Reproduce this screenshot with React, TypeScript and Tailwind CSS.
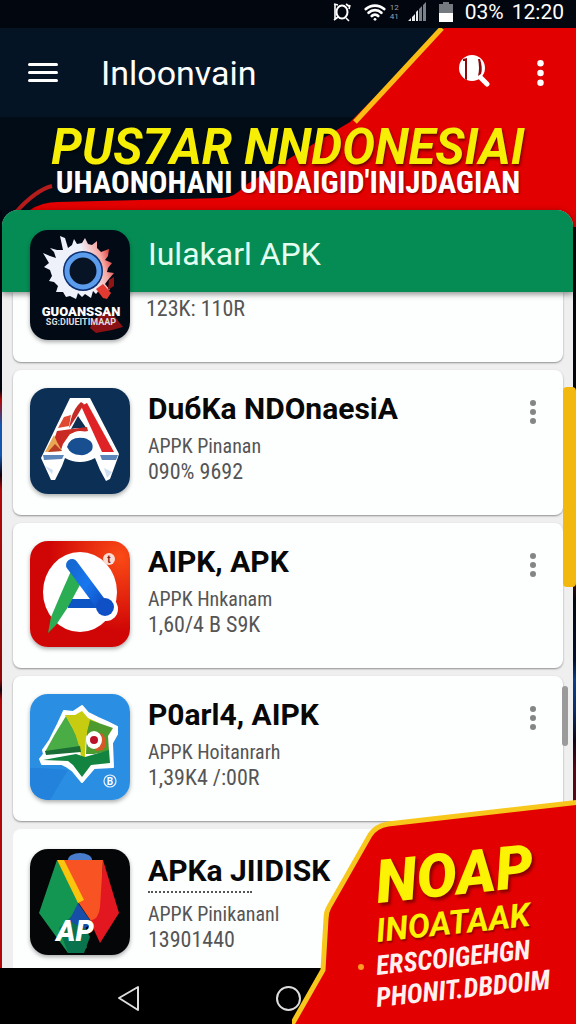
import React from "react";
import { Wifi } from "lucide-react";

type IconProps = { className?: string };

function GearIcon() {
  return (
    <svg viewBox="0 0 100 110" className="block h-[110px] w-[100px]" aria-hidden="true">
      <defs>
        <linearGradient id="gear" x1="0" y1="0.6" x2="1" y2="0.3">
          <stop offset="0.6" stopColor="#eef1fa" />
          <stop offset="0.82" stopColor="#f6a9a4" />
          <stop offset="1" stopColor="#d92020" />
        </linearGradient>
      </defs>
      <rect width="100" height="110" rx="18" fill="#020a15" />
      <path
        d="M30 6L35 8L38 18L42 15L44 9L47 14L52 13L55 8L58 14L62 15L67 11L67 18L71 22L79 19L78 26L75 30L82 33L78 38L77 42L84 43L78 50L75 54L80 60L73 62L70 59L66 64L63 61L61 68L55 64L52 67L48 63L46 69L40 66L36 67L33 62L26 62L28 56L24 52L19 51L22 46L20 40L14 37L19 33L13 23L20 26L26 28L24 22L20 18L27 20L33 20Z"
        fill="url(#gear)"
      />
      <circle cx="53" cy="41" r="20" fill="#0c2f70" />
      <circle cx="53" cy="41" r="16" fill="#071426" stroke="#5c9cec" strokeWidth="5" />
      <path d="M66 59l7-5 8 9-4 6-4-1z" fill="#e23a30" />
      <path d="M79 50l5-3v9l-6 4z" fill="#8f1414" />
      <path d="M60 98l3-8 15-10 8 8 7 9-11 3-16 3z" fill="#8a1114" />
      <text x="51" y="86" textAnchor="middle" fill="#fff" fontFamily="Roboto, sans-serif" fontWeight="900" fontSize="13">GUOANSSAN</text>
      <text x="51" y="95" textAnchor="middle" fill="#ddd" fontFamily="Roboto, sans-serif" fontWeight="700" fontSize="9">SG:DIUEITIMAAP</text>
    </svg>
  );
}

function BigAIcon() {
  return (
    <svg viewBox="0 0 100 106" className="block h-[106px] w-[100px]" aria-hidden="true">
      <rect width="100" height="106" rx="18" fill="#0b2f55" />
      <path d="M40 10H60L89 66L87 72L80 91L76 93L70 82L65 70Q58 74 50 74Q42 74 35 70L32 78L25 92L21 92L11 70Z" fill="#fff" />
      <path d="M51 18L57 15L84 64H72Z" fill="#df2226" />
      <path d="M51 14Q44 20 41 31L39 40L47 28L54 16Z" fill="#c42a26" />
      <path d="M48 28L41 41Q49 39 57 41Z" fill="#102d52" />
      <path d="M34 29L41 27L39 38L28 40Z" fill="#df4a30" />
      <path d="M27 43L57 39L58 43L40 46L33 56L31 62L24 52Z" fill="#c92a23" />
      <path d="M24 47L27 54L32 63L15 64Z" fill="#e9a653" />
      <path d="M25 56L32 63L18 64Z" fill="#b93c26" />
      <circle cx="50" cy="57" r="14" fill="#fff" />
      <path d="M37 59Q40 48 54 50Q65 53 62 62Q57 68 50 67Q41 67 37 59Z" fill="#174f91" />
      <path d="M13 67H34L32 71L14 72ZM70 67H88L86 72H72Z" fill="#5c86b9" />
      <path d="M15 78L23 82L22 86ZM74 80L82 84L77 90Z" fill="#cfe0f2" />
    </svg>
  );
}

function RoundAIcon() {
  return (
    <svg viewBox="0 0 100 106" className="block h-[106px] w-[100px]" aria-hidden="true">
      <defs>
        <radialGradient id="redTile" cx="0.9" cy="0.15" r="0.7">
          <stop offset="0" stopColor="#fa4a16" />
          <stop offset="1" stopColor="#d00606" />
        </radialGradient>
        <linearGradient id="blueLeg" x1="0" y1="0" x2="1" y2="1">
          <stop offset="0" stopColor="#1469d2" />
          <stop offset="0.45" stopColor="#1877ef" />
          <stop offset="1" stopColor="#0c4bc0" />
        </linearGradient>
      </defs>
      <rect width="100" height="106" rx="18" fill="url(#redTile)" />
      <ellipse cx="50" cy="51" rx="37" ry="40" fill="#fff" />
      <circle cx="76" cy="68" r="12" fill="#fff" />
      <path d="M38 58H62L68 67H38Z" fill="#0d55c5" />
      <path d="M41 30L51 42L38 66L26 84L18 92L21 76L30 55Z" fill="#2bad53" />
      <path d="M42 24L74 67" stroke="url(#blueLeg)" strokeWidth="12" strokeLinecap="round" />
      <circle cx="75" cy="66" r="9" fill="#0f50c6" />
      <circle cx="79" cy="18" r="6" fill="#f9ddd5" />
      <text x="79" y="22" textAnchor="middle" fill="#8b2014" fontFamily="Roboto, sans-serif" fontWeight="700" fontSize="10">t</text>
    </svg>
  );
}

function BirdIcon() {
  return (
    <svg viewBox="0 0 100 106" className="block h-[106px] w-[100px]" aria-hidden="true">
      <rect width="100" height="106" rx="18" fill="#2a8fe3" />
      <path d="M10 74L38 76L20 106H18Q0 104 0 88V74Z" fill="#2382dc" />
      <path
        d="M34 17L43 18L52 12L58 19L68 24L77 28L87 33L87 40L82 49L83 73L64 74L52 88L43 77L36 72L32 70H12L10 65L14 60L13 56L20 46L28 30Z"
        fill="#fff"
        stroke="#fff"
        strokeWidth="2"
        strokeLinejoin="round"
      />
      <path d="M36 22L46 40L50 54L15 58L25 40Z" fill="#4aac45" />
      <path d="M35 21L45 21L52 17L58 24L69 29L64 36L56 42L55 63H51Q49 42 35 21Z" fill="#c8cc10" />
      <path d="M60 26L83 34L78 42L79 57L64 60L56 60L57 38Z" fill="#4d9a2e" />
      <path d="M15 57L50 52L51 58L16 61Z" fill="#196d35" />
      <path d="M13 66L46 60L55 63L79 56L80 69L61 71L52 83L43 71L38 67Z" fill="#128440" />
      <path d="M71 38Q80 48 73 56L65 57L66 52Z" fill="#d65824" />
      <ellipse cx="64" cy="46" rx="8" ry="9" fill="#fff" />
      <circle cx="64" cy="46" r="4" fill="#bc1229" />
      <circle cx="80" cy="87" r="6" fill="none" stroke="#e5f2ff" strokeWidth="1.2" />
      <text x="80" y="91" textAnchor="middle" fill="#fff" fontFamily="Roboto, sans-serif" fontWeight="700" fontSize="10">B</text>
    </svg>
  );
}

function GemIcon() {
  return (
    <svg viewBox="0 0 100 106" className="block h-[106px] w-[100px]" aria-hidden="true">
      <rect width="100" height="106" rx="18" fill="#050608" />
      <ellipse cx="50" cy="11" rx="12" ry="7" fill="#477dcc" />
      <path d="M27 11L49 53L40 77L57 98L52 104H38L9 64Z" fill="#149653" />
      <path d="M29 79L47 62L60 88L54 104H38Z" fill="#08734c" />
      <path d="M48 54L62 74L54 80L39 72Z" fill="#174fa8" />
      <path d="M31 11H73L71 69L61 72L48 53Z" fill="#f85322" />
      <path d="M73 11L89 64L70 94L60 72Q69 70 70 58Z" fill="#e3171f" />
      <path d="M27 11H34L54 51L48 54Z" fill="#fbc40d" />
      <text x="45" y="92" textAnchor="middle" fill="#fff" fontFamily="Roboto, sans-serif" fontWeight="900" fontStyle="italic" fontSize="29">AP</text>
    </svg>
  );
}

function Dots({ className }: IconProps) {
  return (
    <svg viewBox="0 0 8 24" className={className} fill="currentColor" aria-hidden="true">
      <circle cx="4" cy="3" r="3" />
      <circle cx="4" cy="12" r="3" />
      <circle cx="4" cy="21" r="3" />
    </svg>
  );
}

function AlarmIcon() {
  return (
    <svg viewBox="0 0 20 20" className="h-5 w-5" fill="none" stroke="#fff" strokeWidth="2" aria-hidden="true">
      <ellipse cx="10" cy="10" rx="5.5" ry="6.5" />
      <path d="M2 2l4 1M3 3v14M2 18l4-3M14 2l4 3M17 7l1-4M14 16l3 3" strokeWidth="1.6" />
    </svg>
  );
}

function SignalIcon() {
  return (
    <svg viewBox="0 0 20 20" className="h-5 w-5" aria-hidden="true">
      <path d="M1 19h3v-3zM5 19h3v-7l-3 3zM9 19h2V8l-2 2z" fill="#e8eaec" />
      <path d="M12 19h3V4l-3 3zM16 19h3V0l-3 3z" fill="#7b828a" />
    </svg>
  );
}

function BatteryIcon() {
  return (
    <svg viewBox="0 0 14 20" className="h-5 w-[14px]" aria-hidden="true">
      <path d="M4 0h6v2h4v9H0V2h4z" fill="#747a80" />
      <path d="M0 11h14v9H0z" fill="#fff" />
    </svg>
  );
}

function SearchGlyph() {
  return (
    <svg viewBox="0 0 32 34" className="h-[34px] w-8" aria-hidden="true">
      <path d="M21 22l8 8" stroke="#fff" strokeWidth="5" strokeLinecap="round" />
      <circle cx="14" cy="14" r="13" fill="#fff" />
      <path d="M5 5L9 4V26L7 25V7H5Z" fill="#8d0b10" />
      <path d="M20 5H22Q25 14 23 20L20 22Q22 14 20 5Z" fill="#8d0b10" />
    </svg>
  );
}

function StatusBar() {
  return (
    <div className="relative flex h-7 items-start justify-end bg-[#02060e] pt-px pr-3 text-white">
      <div className="flex items-center">
        <AlarmIcon />
        <Wifi className="ml-3 h-[22px] w-[22px]" strokeWidth={3} aria-hidden="true" />
        <span className="ml-1 flex flex-col text-[8px] leading-[9px] text-gray-400">
          <span>12</span>
          <span>41</span>
        </span>
        <span className="ml-2"><SignalIcon /></span>
        <span className="ml-3"><BatteryIcon /></span>
        <span className="ml-3 text-[21px] leading-5">03%</span>
        <span className="ml-2 text-[21px] leading-5">12:20</span>
      </div>
    </div>
  );
}

function Header() {
  return (
    <header className="relative">
      <svg viewBox="0 0 576 200" preserveAspectRatio="none" className="absolute inset-x-0 top-0 h-[200px] w-full" aria-hidden="true">
        <rect width="576" height="200" fill="#020c17" />
        <rect width="576" height="89" fill="#041425" />
        <path d="M444 0H576V200H10L30 182Q42 174 58 174L222 170Q236 169 244 158L290 130L350 94Z" fill="#e20000" />
        <path d="M442 0L355 94" stroke="#fbbd14" strokeWidth="5" />
        <path d="M16 184Q36 162 52 158" stroke="#b51c1c" strokeWidth="4" fill="none" />
      </svg>
      <div className="relative flex h-[89px] items-center pr-6 pl-7 text-white">
        <button type="button" aria-label="Menu" className="flex h-10 w-[30px] flex-col items-stretch justify-center gap-[5px]">
          <span className="h-[3px] rounded-sm bg-white" />
          <span className="h-[3px] rounded-sm bg-white" />
          <span className="h-[3px] rounded-sm bg-white" />
        </button>
        <h1 className="ml-[43px] flex-1 text-[34px] leading-10">Inloonvain</h1>
        <button type="button" aria-label="Search" className="mr-[38px] -mt-1"><SearchGlyph /></button>
        <button type="button" aria-label="More options" className="flex w-6 justify-center">
          <Dots className="h-[26px] w-[9px]" />
        </button>
      </div>
      <div className="relative flex h-[93px] flex-col items-center pt-2 whitespace-nowrap">
        <p className="text-[49px] leading-[46px] font-bold text-[#f6ee04] italic [text-shadow:1px_2px_3px_#0008]">PUS7AR NNDONESIAI</p>
        <p className="font-['Roboto_Condensed','Roboto',sans-serif] text-[31px] leading-[24px] font-bold text-white [text-shadow:1px_1px_2px_#0006]">UHAONOHANI UNDAIGID'INIJDAGIAN</p>
      </div>
    </header>
  );
}

type AppEntry = { title: string; author: string; meta: string; icon: React.ReactNode };

const apps: AppEntry[] = [
  { title: "DuбKa NDOnaesiA", author: "APPK Pinanan", meta: "090% 9692", icon: <BigAIcon /> },
  { title: "AIPK, APK", author: "APPK Hnkanam", meta: "1,60/4 B S9K", icon: <RoundAIcon /> },
  { title: "P0arl4, AIPK", author: "APPK Hoitanrarh", meta: "1,39K4 /:00R", icon: <BirdIcon /> },
];

const author = "font-['Roboto_Condensed','Roboto',sans-serif] text-[20px] leading-[26px] text-[#555]";
const meta = "font-['Roboto_Condensed','Roboto',sans-serif] text-[22px] leading-[26px] text-[#555]";
const heading = "text-[30px] leading-10 font-bold text-[#080808]";
const tile = "shrink-0 rounded-[18px] shadow-[0_2px_4px_#0005]";

function AppCard({ app }: { app: AppEntry }) {
  return (
    <li className="flex rounded-lg bg-[#fdfefe] py-[18px] pr-[18px] pl-[17px] shadow-[0_1px_2px_#0006]">
      <div className={`h-[106px] ${tile}`}>{app.icon}</div>
      <div className="ml-[18px] flex h-[109px] flex-1 flex-col pt-px whitespace-nowrap">
        <h2 className={`mb-1 ${heading}`}>{app.title}</h2>
        <p className={author}>{app.author}</p>
        <p className={meta}>{app.meta}</p>
      </div>
      <button type="button" aria-label={`Options for ${app.title}`} className="flex w-6 justify-center self-start pt-3 text-[#858585]">
        <Dots className="h-6 w-2" />
      </button>
    </li>
  );
}

function Promo() {
  const small = "origin-left rotate-[-6deg] font-['Roboto_Condensed','Roboto',sans-serif] text-[27px] leading-[32px] text-[#fff1ef]";
  return (
    <aside className="absolute right-0 bottom-0 h-[226px] w-[284px] overflow-hidden">
      <svg viewBox="0 0 284 226" className="absolute inset-0 h-full w-full" aria-hidden="true">
        <path d="M288 4L96 26Q84 28 78 37L37 109Q34 114 34 121L31 172L-2 230H288Z" fill="#e20000" stroke="#f8c71b" strokeWidth="5" />
        <circle cx="69" cy="169" r="3" fill="#ff9b24" />
      </svg>
      <div className="relative flex flex-col pt-[56px] pl-[84px] font-bold whitespace-nowrap italic">
        <p className="origin-left rotate-[-6deg] text-[60px] leading-[58px] font-black text-[#fbf204] [text-shadow:2px_3px_3px_#0006]">NOAP</p>
        <p className="origin-left rotate-[-6deg] text-[33px] leading-[38px] text-[#fbf204] [text-shadow:1px_2px_2px_#0006]">INOATAAK</p>
        <p className={small}>ERSCOIGEHGN</p>
        <p className={small}>PHONIT.DBDOIM</p>
      </div>
    </aside>
  );
}

function NavBar() {
  return (
    <nav className="flex h-14 justify-center bg-black pt-1">
      <button type="button" aria-label="Back" className="flex w-40 items-center justify-center">
        <svg viewBox="0 0 24 28" className="h-7 w-6" fill="none" stroke="#ddd" strokeWidth="2" strokeLinejoin="round" aria-hidden="true">
          <path d="M3 14L22 3V26Z" />
        </svg>
      </button>
      <button type="button" aria-label="Home" className="flex w-40 items-center justify-center">
        <span className="h-[25px] w-[25px] rounded-full border-2 border-[#ddd]" />
      </button>
      <button type="button" aria-label="Recent apps" className="flex w-40 items-center justify-center">
        <span className="h-[22px] w-[22px] border-2 border-[#ddd]" />
      </button>
    </nav>
  );
}

export default function App() {
  return (
    <div className="relative min-h-screen overflow-hidden bg-[#02060e] font-['Roboto',sans-serif]">
      <StatusBar />
      <Header />
      <main className="relative grid grid-cols-[2px_1fr_3px]">
        <div className="bg-[linear-gradient(#02060e_180px,#b00808_190px,#1257b0_215px,#1257b0_245px,#10000a_265px,#b00808_280px,#8d0808_470px,#12060f_480px,#b00808_490px)]" />
        <div className="relative rounded-t-[16px] bg-[#efefef]">
          <div className="relative z-10 flex h-[82px] rounded-t-[16px] bg-[#058c55] pl-7 shadow-[0_2px_6px_#0007]">
            <div className={`mt-5 h-[110px] ${tile}`}><GearIcon /></div>
            <h2 className="ml-[18px] pt-6 text-[32px] leading-10 whitespace-nowrap text-[#e4fff2]">Iulakarl APK</h2>
          </div>
          <ul className="flex flex-col gap-2 pr-[10px] pl-[11px]">
            <li className="rounded-b-lg bg-[#fdfefe] pt-1 pb-10 pl-[133px] shadow-[0_1px_2px_#0006]">
              <p className={meta}>123K: 110R</p>
            </li>
            {apps.map((app) => (
              <AppCard key={app.title} app={app} />
            ))}
            <li className="flex rounded-t-lg bg-[#fdfefe] pt-5 pr-[18px] pb-[13px] pl-[17px]">
              <div className={`h-[106px] ${tile}`}><GemIcon /></div>
              <div className="ml-[18px] pt-[2px] whitespace-nowrap">
                <h2 className={heading}>APKa JIIDISK</h2>
                <div className="mb-2 w-[104px] border-b-2 border-dotted border-[#555]" />
                <p className={author}>APPK Pinikananl</p>
                <p className={meta}>13901440</p>
              </div>
            </li>
          </ul>
          <div className="absolute top-[177px] right-[-3px] h-[200px] w-[13px] rounded-sm bg-[#f3b80d]" />
          <div className="absolute top-[476px] right-[5px] h-[60px] w-[6px] rounded-sm bg-[#9b9b9b]" />
        </div>
        <div className="bg-[linear-gradient(#e20000_17px,#04060c_17px,#04060c_180px,#6b0808_200px,#6b0808_360px,#020812_390px,#020f30_450px,#0b3e8b_470px,#0b2e6b_500px,#10061a_530px,#5c0512_560px)]" />
      </main>
      <NavBar />
      <Promo />
    </div>
  );
}
